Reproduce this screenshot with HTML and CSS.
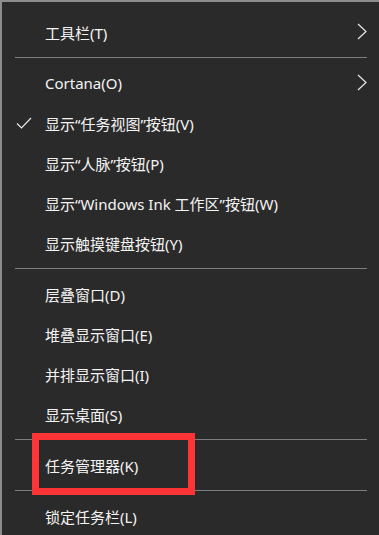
FILE: index.html
```html
<!DOCTYPE html>
<html lang="zh-CN">
<head>
    <meta charset="UTF-8">
    <meta name="viewport" content="width=device-width, initial-scale=1.0">
    <title>任务栏菜单</title>
    <link rel="stylesheet" href="styles.css">
</head>
<body>

    <div class="menu">
        <div class="item">
            <span class="label">工具栏(T)</span>
            <svg class="arrow" width="10" height="17" viewBox="0 0 10 17"><path d="M1 1 L9 8.5 L1 16" fill="none" stroke="#e8e8e8" stroke-width="1.2"/></svg>
        </div>
        <div class="sep"></div>
        <div class="item">
            <span class="label">Cortana(O)</span>
            <svg class="arrow" width="10" height="17" viewBox="0 0 10 17"><path d="M1 1 L9 8.5 L1 16" fill="none" stroke="#e8e8e8" stroke-width="1.2"/></svg>
        </div>
        <div class="item">
            <svg class="check" width="16" height="12" viewBox="0 0 16 12"><path d="M1 6.5 L5.5 11 L15 1" fill="none" stroke="#e8e8e8" stroke-width="1.2"/></svg>
            <span class="label">显示“任务视图”按钮(V)</span>
        </div>
        <div class="item"><span class="label">显示“人脉”按钮(P)</span></div>
        <div class="item"><span class="label">显示“Windows Ink 工作区”按钮(W)</span></div>
        <div class="item"><span class="label">显示触摸键盘按钮(Y)</span></div>
        <div class="sep"></div>
        <div class="item"><span class="label">层叠窗口(D)</span></div>
        <div class="item"><span class="label">堆叠显示窗口(E)</span></div>
        <div class="item"><span class="label">并排显示窗口(I)</span></div>
        <div class="item"><span class="label">显示桌面(S)</span></div>
        <div class="sep"></div>
        <div class="item"><span class="label">任务管理器(K)</span></div>
        <div class="sep"></div>
        <div class="item"><span class="label">锁定任务栏(L)</span></div>

        <!-- red highlight drawn over the menu -->
        <div class="highlight"></div>
    </div>

</body>
</html>
```

FILE: styles.css
```css
html, body {
    margin: 0;
    height: 100%;
    overflow: hidden;
    background: #2a2a2a;
}

.menu {
    position: relative;
    height: 100%;
    box-sizing: border-box;
    background: #2a2a2a;
    border-top: 2px solid #8c8c8c;
    border-left: 2px solid #8c8c8c;
    padding-top: 10px;
    font-family: "Noto Sans", "Noto Sans CJK SC", sans-serif;
    font-size: 15px;
    color: #f4f4f4;
}

.item {
    position: relative;
    height: 40px;
    display: flex;
    align-items: center;
    padding-left: 43px;
}

.label {
    white-space: nowrap;
}

.check {
    position: absolute;
    left: 14px;
    top: 14px;
}

.arrow {
    position: absolute;
    left: 355px;
    top: 11px;
}

.sep {
    height: 1px;
    margin: 5px 12px 5px 13px;
    background: #7d7d7d;
}

.highlight {
    position: absolute;
    left: 30px;
    top: 431px;
    width: 149px;
    height: 48px;
    border: 7px solid #ff3436;
}
```
